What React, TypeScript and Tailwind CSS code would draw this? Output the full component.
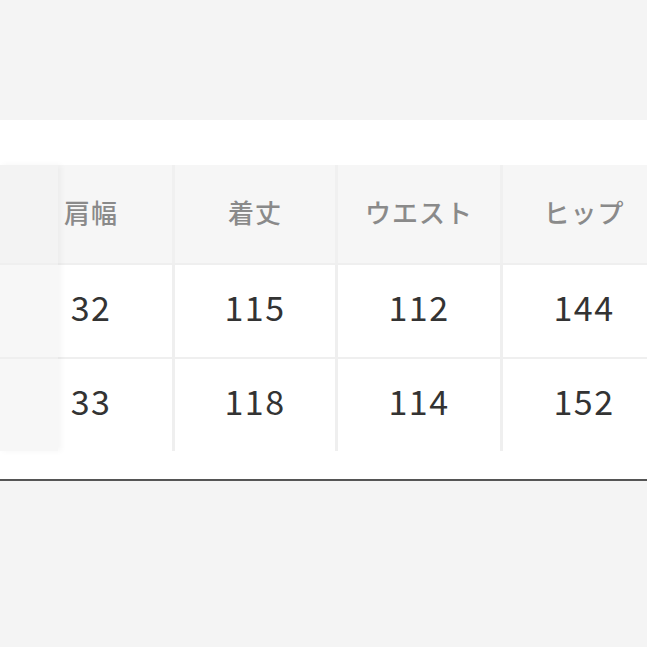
import React from "react";

const headers = ["肩幅", "着丈", "ウエスト", "ヒップ"];
const rows = [
  ["32", "115", "112", "144"],
  ["33", "118", "114", "152"],
];
const widths = ["w-[162px]", "w-[160px]", "w-[162px]", "w-[162px]"];

export default function App() {
  return (
    <div
      className="w-[647px] h-[647px] bg-[#f4f4f4] flex flex-col overflow-hidden"
      style={{ fontFamily: '"Noto Sans CJK JP", "Noto Sans", sans-serif' }}
    >
      <div className="h-[120px] shrink-0" />
      <div className="h-[45px] bg-white shrink-0" />
      <div className="relative bg-[#efefef] shrink-0">
        {/* scrolled table */}
        <div className="flex flex-col gap-[2px] pl-[10px]">
          <div className="flex gap-[3px] h-[98px] bg-[#f0f0f0]">
            {headers.map((h, i) => (
              <div
                key={h}
                className={`${widths[i]} shrink-0 bg-[#f6f6f6] flex items-center justify-center pb-[5px] text-[26px] font-medium text-[#8a8a8a] tracking-[1px]`}
              >
                {h}
              </div>
            ))}
          </div>
          {rows.map((r, ri) => (
            <div key={ri} className="flex gap-[3px] h-[92px]">
              {r.map((c, i) => (
                <div
                  key={i}
                  className={`${widths[i]} shrink-0 bg-white flex items-center justify-center pb-[10px] text-[34px] text-[#333] tracking-[1.5px]`}
                >
                  {c}
                </div>
              ))}
            </div>
          ))}
        </div>
        {/* sticky first column */}
        <div className="absolute left-0 top-0 bottom-0 w-[58px] flex flex-col gap-[2px] shadow-[3px_0_6px_rgba(0,0,0,0.045)]">
          <div className="h-[98px] bg-[#f3f3f3]" />
          <div className="h-[92px] bg-[#f7f7f7]" />
          <div className="h-[92px] bg-[#f7f7f7]" />
        </div>
      </div>
      <div className="h-[28px] bg-white shrink-0" />
      <div className="h-[2px] bg-[#555] shrink-0" />
    </div>
  );
}
